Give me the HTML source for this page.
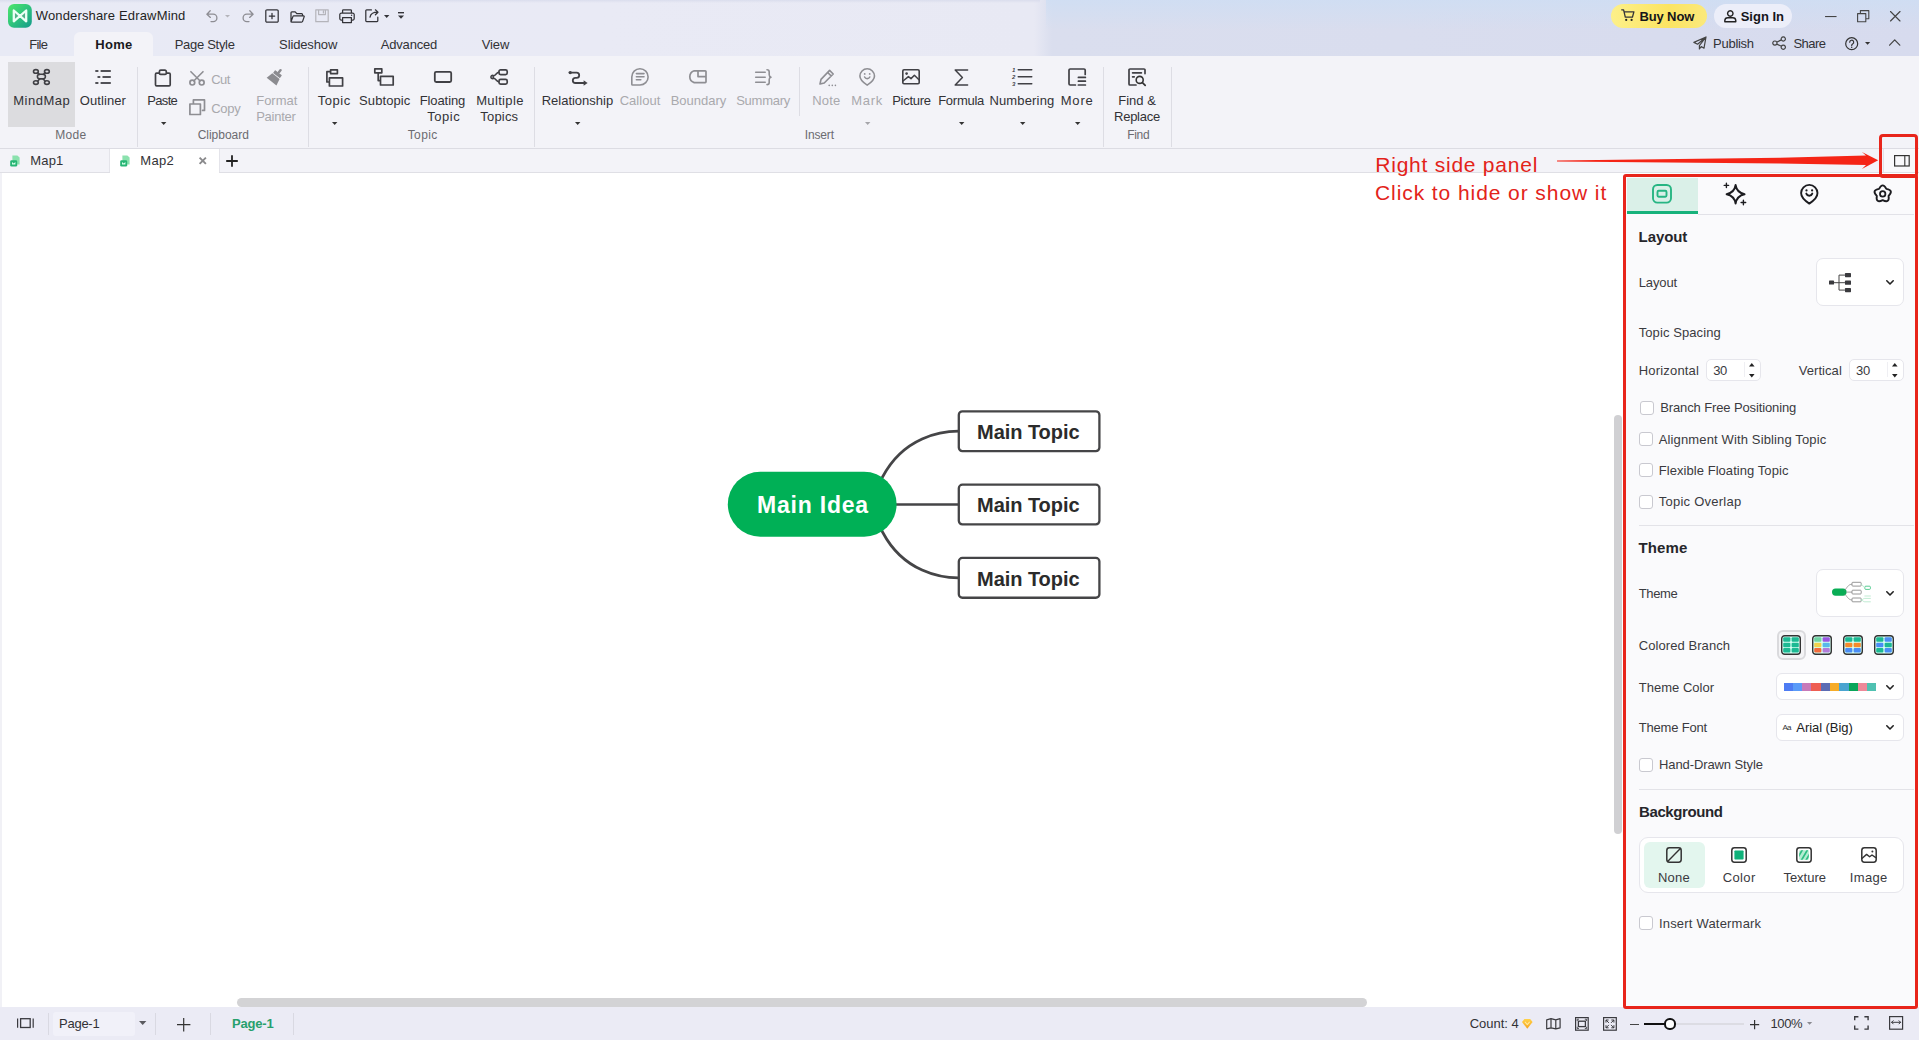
<!DOCTYPE html>
<html lang="en"><head><meta charset="utf-8"><title>Wondershare EdrawMind</title>
<style>
html,body{margin:0;padding:0;}
body{width:1919px;height:1040px;overflow:hidden;position:relative;background:#fff;font-family:"Liberation Sans",sans-serif;}
.a,.t,svg{position:absolute;}
.t{white-space:pre;}
svg{overflow:visible;}
.sep{position:absolute;width:1px;background:#dddde4;}
.cb{position:absolute;width:12px;height:12px;border:1px solid #c9c9d0;border-radius:3px;background:#fff;}
.box{position:absolute;background:#fff;border:1px solid #e6e6ec;box-sizing:border-box;}
</style></head><body>
<div class="a" style="left:0;top:0;width:1919px;height:56px;background:linear-gradient(90deg,#e8eaf5 0px,#e9eaf5 600px,#e8e9f4 1034px,#dadeee 1052px,#d9ddee 1400px,#d7dbee 1919px)"></div>
<div class="a" style="left:1046px;top:0;width:873px;height:30px;background:linear-gradient(180deg,rgba(205,222,244,.75),rgba(205,222,244,0))"></div>
<div class="a" style="left:0;top:0;width:1040px;height:3px;background:linear-gradient(180deg,rgba(215,218,235,.8),rgba(215,218,235,0))"></div>
<div class="a" style="left:74px;top:32px;width:79px;height:24px;background:#f3f3f8;border-radius:6px 6px 0 0"></div>
<div class="a" style="left:0;top:56px;width:1919px;height:92px;background:#f3f3f8"></div>
<div class="a" style="left:0;top:148px;width:1919px;height:1px;background:#dcdce3"></div>
<div class="a" style="left:8px;top:62px;width:67px;height:65px;background:#dcdcdf"></div>
<div class="sep" style="left:137px;top:67px;height:80px"></div>
<div class="sep" style="left:308px;top:67px;height:80px"></div>
<div class="sep" style="left:534px;top:67px;height:80px"></div>
<div class="sep" style="left:1103px;top:67px;height:80px"></div>
<div class="sep" style="left:1171px;top:67px;height:80px"></div>
<div class="sep" style="left:799px;top:67px;height:49px"></div>
<div class="a" style="left:0;top:149px;width:1919px;height:23px;background:#f3f3f8"></div>
<div class="a" style="left:0;top:172px;width:1919px;height:1px;background:#dfdfe5"></div>
<div class="a" style="left:110px;top:149px;width:109px;height:24px;background:#fff"></div>
<div class="sep" style="left:109px;top:149px;height:23px;background:#e4e4ea"></div>
<div class="sep" style="left:219px;top:149px;height:23px;background:#e4e4ea"></div>
<div class="sep" style="left:1883px;top:149px;height:23px;background:#e1e1e8"></div>
<div class="a" style="left:1884px;top:149px;width:35px;height:23px;background:#f8f8fb"></div>
<div class="a" style="left:0;top:173px;width:2px;height:834px;background:#f1f1f6"></div>
<div class="a" style="left:1614px;top:415px;width:8px;height:419px;background:#d0d0d3;border-radius:4px"></div>
<div class="a" style="left:237px;top:998px;width:1130px;height:9px;background:#d3d3d5;border-radius:5px"></div>
<div class="a" style="left:0;top:1007px;width:1919px;height:33px;background:#ebebf5"></div>
<div class="a" style="left:53px;top:1012px;width:82px;height:24px;background:#f1f1f9;border-radius:3px"></div>
<div class="sep" style="left:48px;top:1013px;height:22px;background:#d9d9e2"></div>
<div class="sep" style="left:155px;top:1013px;height:22px;background:#d9d9e2"></div>
<div class="sep" style="left:210px;top:1013px;height:22px;background:#d9d9e2"></div>
<div class="sep" style="left:293px;top:1013px;height:22px;background:#d9d9e2"></div>
<div class="a" style="left:1624px;top:175px;width:293px;height:832px;background:#fafafc"></div>
<svg style="left:0;top:0" width="1919" height="1040" viewBox="0 0 1919 1040" fill="none"><path d="M896 504.5 H958.5" stroke="#454547" stroke-width="2.7" fill="none" stroke-linecap="butt" stroke-linejoin="round"/><path d="M880.4 481 L882.8 476.5 C903.9 436.8 941.2 431.1 958.6 431.1" stroke="#454547" stroke-width="2.7" fill="none" stroke-linecap="butt" stroke-linejoin="round"/><path d="M880.4 528 L882.8 532.5 C903.9 572.2 941.2 577.9 958.6 577.9" stroke="#454547" stroke-width="2.7" fill="none" stroke-linecap="butt" stroke-linejoin="round"/><rect x="958.8" y="411.34999999999997" width="140.6" height="39.8" rx="3.6" fill="#fff" stroke="#454547" stroke-width="2.3"/><rect x="958.8" y="484.65" width="140.6" height="39.8" rx="3.6" fill="#fff" stroke="#454547" stroke-width="2.3"/><rect x="958.8" y="557.9499999999999" width="140.6" height="39.8" rx="3.6" fill="#fff" stroke="#454547" stroke-width="2.3"/><rect x="727.8" y="471.8" width="168.8" height="65" rx="32.5" fill="#00b056"/></svg>
<div class="a" style="left:1627px;top:178px;width:71px;height:33px;background:#daf0e8"></div>
<div class="a" style="left:1627px;top:211px;width:71px;height:3px;background:#17b27b"></div>
<div class="a" style="left:1698px;top:214px;width:216px;height:1px;background:#e2e2e8"></div>
<svg style="left:1652px;top:183.5px" width="20" height="19.5" viewBox="0 0 20 19.5" fill="none" ><rect x="1" y="1" width="18" height="17.6" rx="4.4" stroke="#27b583" stroke-width="1.9"/><rect x="5.5" y="6.7" width="9" height="6" rx="1.2" stroke="#27b583" stroke-width="1.9"/></svg>
<svg style="left:1724px;top:183px" width="22" height="22" viewBox="0 0 22 22" fill="none" ><path d="M11.6 2 C12.4 7.4 14.8 10 20.6 11.2 C14.8 12.4 12.4 15 11.6 20.6 C10.8 15 8.4 12.4 2.6 11.2 C8.4 10 10.8 7.4 11.6 2 Z" stroke="#1c1c20" stroke-width="1.9" fill="none" stroke-linecap="round" stroke-linejoin="round"/><path d="M2.4 .2 V4.6 M.2 2.4 H4.6 M19.4 17.2 V21.8 M17.1 19.5 H21.7" stroke="#1c1c20" stroke-width="1.4" fill="none" stroke-linecap="round" stroke-linejoin="round"/></svg>
<svg style="left:1799.7px;top:184.3px" width="18.6" height="20.6" viewBox="0 0 18.6 20.6" fill="none" ><path d="M9.3 .9 A8.2 8.2 0 0 1 17.5 9.1 C17.5 12.8 14.4 16.4 9.3 19.6 C4.2 16.4 1.1 12.8 1.1 9.1 A8.2 8.2 0 0 1 9.3 .9 Z M6.3 9.6 A3.2 3.2 0 0 0 12.3 9.6" stroke="#1c1c20" stroke-width="1.9" fill="none" stroke-linecap="round" stroke-linejoin="round"/><circle cx="6.5" cy="6.4" r="1.1" fill="#1c1c20"/><circle cx="12.1" cy="6.4" r="1.1" fill="#1c1c20"/></svg>
<svg style="left:1873.3px;top:184.2px" width="19.4" height="19.8" viewBox="0 0 19.4 19.8" fill="none" ><path d="M6.06 4.88 Q9.70 -2.10 13.34 4.88 Q21.11 6.19 15.60 11.82 Q16.75 19.61 9.70 16.10 Q2.65 19.61 3.80 11.82 Q-1.71 6.19 6.06 4.88 Z" stroke="#1c1c20" stroke-width="1.9" fill="none" stroke-linecap="round" stroke-linejoin="round"/><circle cx="9.7" cy="9.9" r="2.7" stroke="#1c1c20" stroke-width="1.8"/></svg>
<div class="box" style="left:1816px;top:258px;width:88px;height:48px;border-radius:7px"></div>
<svg style="left:1829px;top:272.7px" width="22" height="19.4" viewBox="0 0 22 19.4" fill="none" ><rect x="0" y="7.6" width="5" height="4" rx=".6" fill="#3a3a3e"/><rect x="16" y="0" width="6" height="4.2" rx=".6" fill="#3a3a3e"/><rect x="16" y="7.6" width="6" height="4.2" rx=".6" fill="#3a3a3e"/><rect x="16" y="15" width="6" height="4.2" rx=".6" fill="#3a3a3e"/><path d="M5 9.7 H16 M16 2.1 H10 V17.1 H16" stroke="#444" stroke-width="1" fill="none" stroke-linecap="butt" stroke-linejoin="miter"/></svg>
<svg style="left:1886.1px;top:279.9px" width="8" height="5" viewBox="0 0 8 5" fill="none" ><path d="M.8 .8 L4 4 L7.2 .8" stroke="#222" stroke-width="1.6" fill="none" stroke-linecap="round" stroke-linejoin="round"/></svg>
<div class="box" style="left:1705.5px;top:358.6px;width:55px;height:22.6px;border-radius:5px"></div>
<div class="a" style="left:1744.2px;top:362px;width:1px;height:15px;background:#efeff3"></div>
<svg style="left:1749.3px;top:363.4px" width="5.6" height="3.6" viewBox="0 0 5.6 3.6"><path d="M0 3.6H5.6L2.8 0Z" fill="#222"/></svg>
<svg style="left:1749.3px;top:373.7px" width="5.6" height="3.6" viewBox="0 0 5.6 3.6"><path d="M0 0H5.6L2.8 3.6Z" fill="#222"/></svg>
<div class="box" style="left:1848.5px;top:358.6px;width:55px;height:22.6px;border-radius:5px"></div>
<div class="a" style="left:1887.2px;top:362px;width:1px;height:15px;background:#efeff3"></div>
<svg style="left:1892.3px;top:363.4px" width="5.6" height="3.6" viewBox="0 0 5.6 3.6"><path d="M0 3.6H5.6L2.8 0Z" fill="#222"/></svg>
<svg style="left:1892.3px;top:373.7px" width="5.6" height="3.6" viewBox="0 0 5.6 3.6"><path d="M0 0H5.6L2.8 3.6Z" fill="#222"/></svg>
<div class="cb" style="left:1640px;top:400.8px"></div>
<div class="cb" style="left:1639.3px;top:432.3px"></div>
<div class="cb" style="left:1639.3px;top:463.4px"></div>
<div class="cb" style="left:1639.3px;top:494.6px"></div>
<div class="cb" style="left:1639.3px;top:758.2px"></div>
<div class="cb" style="left:1639.3px;top:916.3px"></div>
<div class="a" style="left:1639px;top:525px;width:275px;height:1px;background:#e3e3e8"></div>
<div class="a" style="left:1639px;top:789px;width:275px;height:1px;background:#e3e3e8"></div>
<div class="box" style="left:1816px;top:569.3px;width:88px;height:47.5px;border-radius:7px"></div>
<svg style="left:1831.6px;top:582px" width="40" height="21" viewBox="0 0 40 21" fill="none" ><rect x="0" y="6.5" width="14.6" height="7.2" rx="3.6" fill="#09ad55"/><path d="M13 8 C16 4 17 2.2 20 2.2 M14.6 10.1 H20 M13 12.2 C16 16 17 18 20 18" stroke="#8a8a8a" stroke-width="0.8" fill="none" stroke-linecap="round" stroke-linejoin="round"/><rect x="20" y="0.3" width="9.2" height="3.8" rx=".8" fill="#fff" stroke="#7d7d7d" stroke-width=".8"/><rect x="20" y="8.2" width="9.2" height="3.8" rx=".8" fill="#fff" stroke="#7d7d7d" stroke-width=".8"/><rect x="20" y="16" width="9.2" height="3.8" rx=".8" fill="#fff" stroke="#7d7d7d" stroke-width=".8"/><rect x="32.8" y="4.2" width="5.6" height="3.2" rx="1" fill="#fff" stroke="#2fbf78" stroke-width=".8"/><path d="M29.2 2.2 C31 2.2 31 5.8 32.8 5.8 M29.2 18 C31 18 31 16.4 32.8 16.4 H38.4 M29.2 18 C31 18 31 19.8 32.8 19.8 H38.4 M32.8 14 H38.4" stroke="#a6e3c0" stroke-width="0.7" fill="none" stroke-linecap="round" stroke-linejoin="round"/></svg>
<svg style="left:1886.1px;top:590.9px" width="8" height="5" viewBox="0 0 8 5" fill="none" ><path d="M.8 .8 L4 4 L7.2 .8" stroke="#222" stroke-width="1.6" fill="none" stroke-linecap="round" stroke-linejoin="round"/></svg>
<div class="a" style="left:1776.7px;top:629.6px;width:29.3px;height:30.7px;box-sizing:border-box;border:2px solid #dadadd;border-radius:6px;background:#f4f4f6"></div>
<svg style="left:1781px;top:635px" width="20" height="20" viewBox="0 0 20 20" fill="none" ><rect x=".7" y=".7" width="18.6" height="18.6" rx="3" fill="#d6fff3" stroke="#333" stroke-width="1.4"/><rect x="2.2" y="2.3" width="7.2" height="4.5" rx="1" fill="#1cb993"/><rect x="10.6" y="2.3" width="7.2" height="4.5" rx="1" fill="#1cb993"/><rect x="2.2" y="7.7" width="7.2" height="4.5" rx="1" fill="#1cb993"/><rect x="10.6" y="7.7" width="7.2" height="4.5" rx="1" fill="#1cb993"/><rect x="2.2" y="13.1" width="7.2" height="4.5" rx="1" fill="#1cb993"/><rect x="10.6" y="13.1" width="7.2" height="4.5" rx="1" fill="#1cb993"/></svg>
<svg style="left:1812px;top:635px" width="20" height="20" viewBox="0 0 20 20" fill="none" ><rect x=".7" y=".7" width="18.6" height="18.6" rx="3" fill="#d6fff3" stroke="#333" stroke-width="1.4"/><rect x="2.2" y="2.3" width="7.2" height="4.5" rx="1" fill="#6fd3a2"/><rect x="10.6" y="2.3" width="7.2" height="4.5" rx="1" fill="#9a55e2"/><rect x="2.2" y="7.7" width="7.2" height="4.5" rx="1" fill="#f1d14c"/><rect x="10.6" y="7.7" width="7.2" height="4.5" rx="1" fill="#57b9ea"/><rect x="2.2" y="13.1" width="7.2" height="4.5" rx="1" fill="#f26b3c"/><rect x="10.6" y="13.1" width="7.2" height="4.5" rx="1" fill="#b27cda"/></svg>
<svg style="left:1843px;top:635px" width="20" height="20" viewBox="0 0 20 20" fill="none" ><rect x=".7" y=".7" width="18.6" height="18.6" rx="3" fill="#d6fff3" stroke="#333" stroke-width="1.4"/><rect x="2.2" y="2.3" width="7.2" height="4.5" rx="1" fill="#1cb993"/><rect x="10.6" y="2.3" width="7.2" height="4.5" rx="1" fill="#1cb993"/><rect x="2.2" y="7.7" width="7.2" height="4.5" rx="1" fill="#f58a2c"/><rect x="10.6" y="7.7" width="7.2" height="4.5" rx="1" fill="#f58a2c"/><rect x="2.2" y="13.1" width="7.2" height="4.5" rx="1" fill="#4a8df5"/><rect x="10.6" y="13.1" width="7.2" height="4.5" rx="1" fill="#4a8df5"/></svg>
<svg style="left:1874px;top:635px" width="20" height="20" viewBox="0 0 20 20" fill="none" ><rect x=".7" y=".7" width="18.6" height="18.6" rx="3" fill="#d6fff3" stroke="#333" stroke-width="1.4"/><rect x="2.2" y="2.3" width="7.2" height="4.5" rx="1" fill="#1cb993"/><rect x="10.6" y="2.3" width="7.2" height="4.5" rx="1" fill="#4a8df5"/><rect x="2.2" y="7.7" width="7.2" height="4.5" rx="1" fill="#4a8df5"/><rect x="10.6" y="7.7" width="7.2" height="4.5" rx="1" fill="#1cb993"/><rect x="2.2" y="13.1" width="7.2" height="4.5" rx="1" fill="#1cb993"/><rect x="10.6" y="13.1" width="7.2" height="4.5" rx="1" fill="#4a8df5"/></svg>
<div class="box" style="left:1776.3px;top:673.4px;width:127.4px;height:27px;border-radius:6px"></div>
<div class="a" style="left:1783.70px;top:682.8px;width:9.3px;height:8.5px;background:#4e7cf3"></div><div class="a" style="left:1792.96px;top:682.8px;width:9.3px;height:8.5px;background:#5a9bf8"></div><div class="a" style="left:1802.22px;top:682.8px;width:9.3px;height:8.5px;background:#c77ab9"></div><div class="a" style="left:1811.48px;top:682.8px;width:9.3px;height:8.5px;background:#ee5e53"></div><div class="a" style="left:1820.74px;top:682.8px;width:9.3px;height:8.5px;background:#5c6cb4"></div><div class="a" style="left:1830.00px;top:682.8px;width:9.3px;height:8.5px;background:#f6ac29"></div><div class="a" style="left:1839.26px;top:682.8px;width:9.3px;height:8.5px;background:#4aa4d0"></div><div class="a" style="left:1848.52px;top:682.8px;width:9.3px;height:8.5px;background:#09a65a"></div><div class="a" style="left:1857.78px;top:682.8px;width:9.3px;height:8.5px;background:#ee8999"></div><div class="a" style="left:1867.04px;top:682.8px;width:9.3px;height:8.5px;background:#4fc1b1"></div>
<svg style="left:1886.1px;top:684.7px" width="8" height="5" viewBox="0 0 8 5" fill="none" ><path d="M.8 .8 L4 4 L7.2 .8" stroke="#222" stroke-width="1.6" fill="none" stroke-linecap="round" stroke-linejoin="round"/></svg>
<div class="box" style="left:1776.3px;top:713.6px;width:127.4px;height:27px;border-radius:6px"></div>
<svg style="left:1886.1px;top:724.9px" width="8" height="5" viewBox="0 0 8 5" fill="none" ><path d="M.8 .8 L4 4 L7.2 .8" stroke="#222" stroke-width="1.6" fill="none" stroke-linecap="round" stroke-linejoin="round"/></svg>
<div class="box" style="left:1639px;top:837px;width:264.6px;height:55.6px;border-radius:9px"></div>
<div class="a" style="left:1644.3px;top:842px;width:60.6px;height:46px;border-radius:6px;background:#e3f6ee"></div>
<svg style="left:1666px;top:847px" width="16" height="16" viewBox="0 0 16 16" fill="none" ><rect x=".8" y=".8" width="14.4" height="14.4" rx="2.6" stroke="#333" stroke-width="1.5"/><path d="M1.6 14.4 L14.4 1.6" stroke="#333" stroke-width="1.4" fill="none" stroke-linecap="round" stroke-linejoin="round"/></svg>
<svg style="left:1731px;top:847px" width="16" height="16" viewBox="0 0 16 16" fill="none" ><rect x=".8" y=".8" width="14.4" height="14.4" rx="2.6" stroke="#333" stroke-width="1.5"/><rect x="3.4" y="3.4" width="9.2" height="9.2" rx=".8" fill="#0fb27a"/></svg>
<svg style="left:1796px;top:847px" width="16" height="16" viewBox="0 0 16 16" fill="none" ><rect x=".8" y=".8" width="14.4" height="14.4" rx="2.6" stroke="#333" stroke-width="1.5"/><rect x="3.2" y="3.2" width="9.6" height="9.6" rx=".8" fill="#b4ecd2"/><clipPath id="tc"><rect x="3.2" y="3.2" width="9.6" height="9.6" rx=".8"/></clipPath><g clip-path="url(#tc)" stroke="#2dbd82" stroke-width="1.7"><path d="M1.5 11 L7.5 1 M5 14 L12 2 M9 15 L15.5 4 M13 15 L17 8"/></g></svg>
<svg style="left:1861px;top:847px" width="16" height="16" viewBox="0 0 16 16" fill="none" ><rect x=".8" y=".8" width="14.4" height="14.4" rx="2.6" stroke="#333" stroke-width="1.5"/><path d="M1.2 11.2 L5.6 7.4 L8.6 9.8 L11 8 L14.8 10.6" stroke="#333" stroke-width="1.4" fill="none" stroke-linecap="round" stroke-linejoin="round"/><circle cx="11.4" cy="4.6" r="1" fill="#333"/></svg>
<svg style="left:8px;top:4px" width="24" height="24" viewBox="0 0 24 24" fill="none" ><defs><linearGradient id="lg" x1="0" y1="0" x2="1" y2="1"><stop offset="0" stop-color="#50e76c"/><stop offset=".5" stop-color="#2fc47c"/><stop offset="1" stop-color="#149a8c"/></linearGradient></defs>
<rect width="23.8" height="23.8" rx="6" fill="url(#lg)"/>
<path d="M5.8 6.4 L11.9 11.9 L5.8 17.4 Z M18.2 6.4 L11.9 11.9 L18.2 17.4 Z" fill="#5aae8c" fill-opacity=".85"/>
<path d="M5.8 17.3 V6.5 L18.2 17.3 V6.5 L5.8 17.3" stroke="#ecfff6" stroke-width="2.3" stroke-linejoin="round" stroke-linecap="round" fill="none"/></svg>
<svg style="left:206px;top:10px" width="12" height="12" viewBox="0 0 12 12" fill="none" ><path d="M4.2 0.8 L0.9 4.2 L4.4 7.4 M1.2 4.2 H7.2 A3.7 3.7 0 0 1 7.2 11.6 H5" stroke="#8d8d93" stroke-width="1.3" fill="none" stroke-linecap="round" stroke-linejoin="round"/></svg>
<svg style="left:225.3px;top:15.0px" width="5" height="2.6" viewBox="0 0 5 2.6"><path d="M0 0H5L2.5 2.6Z" fill="#b4b4ba"/></svg>
<svg style="left:242px;top:10px" width="12" height="12" viewBox="0 0 12 12" fill="none" ><path d="M7.8 0.8 L11.1 4.2 L7.6 7.4 M10.8 4.2 H4.8 A3.7 3.7 0 0 0 4.8 11.6 H7" stroke="#8d8d93" stroke-width="1.3" fill="none" stroke-linecap="round" stroke-linejoin="round"/></svg>
<svg style="left:265px;top:9px" width="14" height="14" viewBox="0 0 14 14" fill="none" ><path d="M2 .8 H12 A1.2 1.2 0 0 1 13.2 2 V12 A1.2 1.2 0 0 1 12 13.2 H2 A1.2 1.2 0 0 1 .8 12 V2 A1.2 1.2 0 0 1 2 .8 Z M7 4.3 V9.7 M4.3 7 H9.7" stroke="#333338" stroke-width="1.25" fill="none" stroke-linecap="round" stroke-linejoin="round"/></svg>
<svg style="left:290px;top:10.5px" width="15" height="12" viewBox="0 0 15 12" fill="none" ><path d="M1 10.5 V1.8 A.9 .9 0 0 1 1.9 .9 H5.2 L6.8 2.6 H11.6 A.9 .9 0 0 1 12.5 3.5 V4.8 M1 10.8 L3 5.4 A.9 .9 0 0 1 3.8 4.8 H13.6 A.6 .6 0 0 1 14.2 5.6 L12.6 10.4 A.9 .9 0 0 1 11.8 11 H1.6" stroke="#333338" stroke-width="1.25" fill="none" stroke-linecap="round" stroke-linejoin="round"/></svg>
<svg style="left:315px;top:9px" width="14" height="13.5" viewBox="0 0 14 13.5" fill="none" ><path d="M.8 .8 H13.2 V12.7 H.8 Z M3.6 .8 V5.6 H10.4 V.8 M8.4 2.2 V4" stroke="#b4b4ba" stroke-width="1.2" fill="none" stroke-linecap="round" stroke-linejoin="round"/></svg>
<svg style="left:339px;top:9px" width="16" height="14.5" viewBox="0 0 16 14.5" fill="none" ><path d="M3.6 4.2 V1.6 A.8 .8 0 0 1 4.4 .8 H11.6 A.8 .8 0 0 1 12.4 1.6 V4.2 M3.6 11 H2.2 A1.4 1.4 0 0 1 .8 9.6 V5.6 A1.4 1.4 0 0 1 2.2 4.2 H13.8 A1.4 1.4 0 0 1 15.2 5.6 V9.6 A1.4 1.4 0 0 1 13.8 11 H12.4 M3.6 8.6 H12.4 V13.6 H3.6 Z" stroke="#333338" stroke-width="1.25" fill="none" stroke-linecap="round" stroke-linejoin="round"/><circle cx="12.6" cy="6.3" r=".7" fill="#333338"/></svg>
<svg style="left:365px;top:9px" width="14.5" height="13.5" viewBox="0 0 14.5 13.5" fill="none" ><path d="M6.4 .9 H1.6 A.8 .8 0 0 0 .8 1.7 V11.8 A.8 .8 0 0 0 1.6 12.6 H12 A.8 .8 0 0 0 12.8 11.8 V8.2 M5 8.2 C5.6 5 8 3.2 12.6 3.2 M10.4 .8 L13 3.2 L10.4 5.8" stroke="#333338" stroke-width="1.25" fill="none" stroke-linecap="round" stroke-linejoin="round"/></svg>
<svg style="left:383.90000000000003px;top:15.0px" width="5.4" height="3" viewBox="0 0 5.4 3"><path d="M0 0H5.4L2.7 3Z" fill="#333338"/></svg>
<svg style="left:397.5px;top:12px" width="6" height="8" viewBox="0 0 6 8" fill="none" ><rect x="0" y="0" width="6" height="1.4" fill="#333338"/><path d="M0 3.4H6L3 6.8Z" fill="#333338"/></svg>
<div class="a" style="left:1610.5px;top:4px;width:96px;height:23.5px;border-radius:12px;background:linear-gradient(90deg,#fdf08a,#fbe462 60%,#fbe97c)"></div>
<svg style="left:1620.5px;top:9px" width="14" height="12.5" viewBox="0 0 14 12.5" fill="none" ><path d="M.7 .8 H2.6 L4.3 8.2 H11.4 L12.9 2.9 H3.1" stroke="#333338" stroke-width="1.3" fill="none" stroke-linecap="round" stroke-linejoin="round"/><circle cx="5.2" cy="10.9" r="1.1" fill="#222"/><circle cx="10.6" cy="10.9" r="1.1" fill="#222"/></svg>
<div class="a" style="left:1714px;top:4px;width:78px;height:23.5px;border-radius:12px;background:#eceef9"></div>
<svg style="left:1723.7px;top:10px" width="12.6" height="12.6" viewBox="0 0 12.6 12.6" fill="none" ><path d="M6.3 .8 A2.7 2.7 0 1 1 6.29 .8 Z M.8 11.8 V10.6 A3 3 0 0 1 3.8 7.8 H8.8 A3 3 0 0 1 11.8 10.6 V11.8 Z" stroke="#222" stroke-width="1.4" fill="none" stroke-linecap="round" stroke-linejoin="round"/></svg>
<svg style="left:1825px;top:16px" width="12" height="1.2" viewBox="0 0 12 1.2" fill="none" ><rect width="11.6" height="1.1" fill="#444"/></svg>
<svg style="left:1856.5px;top:9.5px" width="12.5" height="12.5" viewBox="0 0 12.5 12.5" fill="none" ><path d="M.6 3.6 H8.8 V11.8 H.6 Z M3.4 3.4 V.6 H11.8 V8.8 H9" stroke="#444" stroke-width="1.1" fill="none" stroke-linecap="round" stroke-linejoin="round"/></svg>
<svg style="left:1889.5px;top:11px" width="10.5" height="10.5" viewBox="0 0 10.5 10.5" fill="none" ><path d="M.5 .5 L10 10 M10 .5 L.5 10" stroke="#444" stroke-width="1.15" fill="none" stroke-linecap="round" stroke-linejoin="round"/></svg>
<svg style="left:1692.5px;top:36px" width="14" height="14" viewBox="0 0 14 14" fill="none" ><path d="M13 1 L.9 6.4 L4.6 8.2 L13 1 L6.4 9.6 V13 L8.2 10.6 L11 12.2 Z" stroke="#444" stroke-width="1.2" fill="none" stroke-linecap="round" stroke-linejoin="round"/></svg>
<svg style="left:1771.7px;top:36px" width="14.2" height="14.2" viewBox="0 0 14.2 14.2" fill="none" ><path d="M11.3 .9 A2.1 2.1 0 1 1 11.29 .9 Z M2.9 5 A2.1 2.1 0 1 1 2.89 5 Z M11.3 9.1 A2.1 2.1 0 1 1 11.29 9.1 Z M4.8 6.1 L9.4 3.9 M4.8 8.1 L9.4 10.3" stroke="#444" stroke-width="1.2" fill="none" stroke-linecap="round" stroke-linejoin="round"/></svg>
<svg style="left:1845px;top:36.5px" width="13.4" height="13.4" viewBox="0 0 13.4 13.4" fill="none" ><circle cx="6.7" cy="6.7" r="6" stroke="#333" stroke-width="1.2"/><path d="M4.7 5.2 A2 2 0 1 1 7.6 7 C6.9 7.4 6.7 7.8 6.7 8.4" stroke="#333" stroke-width="1.2" fill="none" stroke-linecap="round" stroke-linejoin="round"/><circle cx="6.7" cy="10.2" r=".75" fill="#333"/></svg>
<svg style="left:1864.8000000000002px;top:42.2px" width="5.2" height="2.8" viewBox="0 0 5.2 2.8"><path d="M0 0H5.2L2.6 2.8Z" fill="#333"/></svg>
<svg style="left:1888.6px;top:39px" width="11.4" height="7" viewBox="0 0 11.4 7" fill="none" ><path d="M.6 6.2 L5.7 .8 L10.8 6.2" stroke="#444" stroke-width="1.2" fill="none" stroke-linecap="round" stroke-linejoin="round"/></svg>
<svg style="left:32px;top:68px" width="19" height="18" viewBox="0 0 19 18" fill="none" ><ellipse cx="3.8999999999999986" cy="3.4000000000000057" rx="2.4" ry="1.8" stroke="#404045" stroke-width="1.6"/><ellipse cx="14.899999999999999" cy="3.4000000000000057" rx="2.4" ry="1.8" stroke="#404045" stroke-width="1.6"/><ellipse cx="3.8999999999999986" cy="14.599999999999994" rx="2.4" ry="1.8" stroke="#404045" stroke-width="1.6"/><ellipse cx="14.899999999999999" cy="14.599999999999994" rx="2.4" ry="1.8" stroke="#404045" stroke-width="1.6"/><rect x="5.399999999999999" y="6.299999999999997" width="8" height="4.6" rx="2.3" stroke="#404045" stroke-width="1.6"/><path d="M5.600000000000001 4.700000000000003 L7.600000000000001 6.5 M13.200000000000003 4.700000000000003 L11.200000000000003 6.5 M5.600000000000001 13.299999999999997 L7.600000000000001 11 M13.200000000000003 13.299999999999997 L11.200000000000003 11" stroke="#404045" stroke-width="1.6" fill="none" stroke-linecap="round" stroke-linejoin="round"/></svg>
<svg style="left:95px;top:70px" width="16" height="14" viewBox="0 0 16 14" fill="none" ><rect x="0.29999999999999716" y="0.09999999999999998" width="3.1000000000000085" height="1.8" fill="#404045"/><rect x="5.599999999999994" y="0.09999999999999998" width="10.200000000000003" height="1.8" fill="#404045"/><rect x="2.5" y="6.1" width="2.799999999999997" height="1.8" fill="#404045"/><rect x="7.5" y="6.1" width="8.299999999999997" height="1.8" fill="#404045"/><rect x="0.29999999999999716" y="12.1" width="3.1000000000000085" height="1.8" fill="#404045"/><rect x="5.599999999999994" y="12.1" width="10.200000000000003" height="1.8" fill="#404045"/></svg>
<svg style="left:154px;top:68.5px" width="18" height="18" viewBox="0 0 18 18" fill="none" ><path d="M5 4.2 H2.6 A1.1 1.1 0 0 0 1.5 5.3 V15.7 A1.1 1.1 0 0 0 2.6 16.8 H15.1 A1.1 1.1 0 0 0 16.2 15.7 V5.3 A1.1 1.1 0 0 0 15.1 4.2 H12.6 M6.8 1.2 H10.9 A1.4 1.4 0 0 1 12.3 2.6 V4.2 A1.2 1.2 0 0 1 11.1 5.4 H6.6 A1.2 1.2 0 0 1 5.4 4.2 V2.6 A1.4 1.4 0 0 1 6.8 1.2 Z" stroke="#404045" stroke-width="1.7" fill="none" stroke-linecap="round" stroke-linejoin="round"/></svg>
<svg style="left:160.9px;top:122.1px" width="5.4" height="3" viewBox="0 0 5.4 3"><path d="M0 0H5.4L2.7 3Z" fill="#333"/></svg>
<svg style="left:189px;top:70.5px" width="16" height="15" viewBox="0 0 16 15" fill="none" ><path d="M1.9 .7 L10.9 9.8 M14 .7 L5 9.8" stroke="#8e8e93" stroke-width="1.6" fill="none" stroke-linecap="round" stroke-linejoin="round"/><circle cx="3.3" cy="11.6" r="2.4" stroke="#8e8e93" stroke-width="1.7"/><circle cx="12.7" cy="11.6" r="2.4" stroke="#8e8e93" stroke-width="1.7"/></svg>
<svg style="left:189px;top:99px" width="16.5" height="16.5" viewBox="0 0 16.5 16.5" fill="none" ><path d="M.9 5 H11.4 V15.5 H.9 Z M4.4 4.6 V.9 H15.5 V11.4 H13.6" stroke="#8e8e93" stroke-width="1.7" fill="none" stroke-linecap="round" stroke-linejoin="round"/></svg>
<svg style="left:267px;top:68.5px" width="17" height="16" viewBox="0 0 17 16" fill="none" ><g transform="translate(8.4 7.8) rotate(38)" fill="#8b8b90"><rect x="-1.2" y="-9.6" width="2.4" height="5" rx="1.1"/><rect x="-4.3" y="-5.2" width="8.6" height="3.6" rx=".6"/><path d="M-4.6 -.9 H4.6 L6.2 6.2 H-6.2 Z"/></g></svg>
<svg style="left:326px;top:69px" width="17.5" height="18" viewBox="0 0 17.5 18" fill="none" ><path d="M4.6 .8 H11.4 V4.6 H4.6 Z M3.4 8.9 H16.6 V17 H3.4 Z M4.4 2.7 H.9 V13 H3.2" stroke="#404045" stroke-width="1.7" fill="none" stroke-linecap="round" stroke-linejoin="round"/></svg>
<svg style="left:331.8px;top:122.1px" width="5.4" height="3" viewBox="0 0 5.4 3"><path d="M0 0H5.4L2.7 3Z" fill="#333"/></svg>
<svg style="left:374px;top:68px" width="20" height="18" viewBox="0 0 20 18" fill="none" ><path d="M.8 .8 H7.8 V4.8 H.8 Z M6.5 8.4 H19.2 V17 H6.5 Z M4.2 5 V12.6 H6.3" stroke="#404045" stroke-width="1.7" fill="none" stroke-linecap="round" stroke-linejoin="round"/></svg>
<svg style="left:434px;top:71.3px" width="18" height="11.8" viewBox="0 0 18 11.8" fill="none" ><rect x=".8" y=".8" width="16.4" height="10.2" rx="1.4" stroke="#404045" stroke-width="1.8"/></svg>
<svg style="left:490px;top:69px" width="18" height="16" viewBox="0 0 18 16" fill="none" ><rect x="9" y=".8" width="8.2" height="4.9" rx="1.6" stroke="#404045" stroke-width="1.7"/><rect x="9" y="10.3" width="8.2" height="4.9" rx="1.6" stroke="#404045" stroke-width="1.7"/><path d="M3.2 6.4 A1.7 1.7 0 1 0 3.2 9.6 Z M3.4 7 C6 6.6 6.4 3.4 8.8 3.3 M3.4 9 C6 9.4 6.4 12.6 8.8 12.7" stroke="#404045" stroke-width="1.6" fill="none" stroke-linecap="round" stroke-linejoin="round"/></svg>
<svg style="left:567.5px;top:69.5px" width="20" height="16" viewBox="0 0 20 16" fill="none" ><circle cx="2.2" cy="2.6" r="1.7" fill="#404045"/><path d="M2.2 2.6 H8.6 A2.6 2.6 0 0 1 8.6 7.8 H7.4 A2.6 2.6 0 0 0 7.4 13 H16" stroke="#404045" stroke-width="1.8" fill="none" stroke-linecap="round" stroke-linejoin="round"/><path d="M15.6 10.2 L19.6 13 L15.6 15.8 Z" fill="#404045"/></svg>
<svg style="left:574.8px;top:122.1px" width="5.4" height="3" viewBox="0 0 5.4 3"><path d="M0 0H5.4L2.7 3Z" fill="#333"/></svg>
<svg style="left:631px;top:68px" width="18" height="18" viewBox="0 0 18 18" fill="none" ><path d="M9 .8 A8.1 8.1 0 0 1 9 17 H1.6 A.8 .8 0 0 1 .8 16.2 V9 A8.1 8.1 0 0 1 9 .8 Z M5.4 5.6 H13 M5.4 8.7 H13 M5.4 11.8 H9.8" stroke="#8e8e93" stroke-width="1.6" fill="none" stroke-linecap="round" stroke-linejoin="round"/></svg>
<svg style="left:689px;top:70px" width="18" height="13.5" viewBox="0 0 18 13.5" fill="none" ><path d="M5.2 .8 H16.2 A.8 .8 0 0 1 17 1.6 V11.8 A.8 .8 0 0 1 16.2 12.6 H5.2 C2.4 11.6 .8 9.4 .8 6.7 C.8 4 2.4 1.8 5.2 .8 Z M9 .9 V6.6 H16.8" stroke="#8e8e93" stroke-width="1.7" fill="none" stroke-linecap="round" stroke-linejoin="round"/></svg>
<svg style="left:754.5px;top:68.5px" width="17" height="17" viewBox="0 0 17 17" fill="none" ><path d="M.7 3.2 H10.2 M.7 8.2 H10.2 M.7 13.2 H10.2 M12 .8 C13.8 .8 14.2 1.6 14.2 3 V5.8 C14.2 7.2 14.8 8 16 8.2 C14.8 8.4 14.2 9.2 14.2 10.6 V13.4 C14.2 14.8 13.8 15.6 12 15.6" stroke="#8e8e93" stroke-width="1.6" fill="none" stroke-linecap="round" stroke-linejoin="round"/></svg>
<svg style="left:818.5px;top:68.5px" width="18" height="18" viewBox="0 0 18 18" fill="none" ><path d="M10.6 1.4 L14.2 5 L5.2 14 L1 15 L2 10.4 Z M8.6 3.4 L12.2 7" stroke="#8e8e93" stroke-width="1.6" fill="none" stroke-linecap="round" stroke-linejoin="round"/><circle cx="10.2" cy="16.4" r=".8" fill="#8e8e93"/><circle cx="13.3" cy="16.4" r=".8" fill="#8e8e93"/><circle cx="16.4" cy="16.4" r=".8" fill="#8e8e93"/></svg>
<svg style="left:859px;top:68px" width="16.4" height="18" viewBox="0 0 16.4 18" fill="none" ><path d="M8.2 .8 A7.3 7.3 0 0 1 15.5 8.1 C15.5 11.4 12.6 14.4 8.2 17.2 C3.8 14.4 .9 11.4 .9 8.1 A7.3 7.3 0 0 1 8.2 .8 Z M5.6 9 A2.9 2.9 0 0 0 10.8 9" stroke="#8e8e93" stroke-width="1.6" fill="none" stroke-linecap="round" stroke-linejoin="round"/><circle cx="5.7" cy="5.9" r=".9" fill="#8e8e93"/><circle cx="10.7" cy="5.9" r=".9" fill="#8e8e93"/></svg>
<svg style="left:864.6999999999999px;top:122.1px" width="5.4" height="3" viewBox="0 0 5.4 3"><path d="M0 0H5.4L2.7 3Z" fill="#a5a5aa"/></svg>
<svg style="left:902px;top:69px" width="18" height="15.6" viewBox="0 0 18 15.6" fill="none" ><rect x=".8" y=".8" width="16.4" height="14" rx="1.2" stroke="#404045" stroke-width="1.6"/><circle cx="4.6" cy="4.6" r="1.3" fill="#404045"/><path d="M1 12 L6.4 7.6 L9 9.6 L12.4 6.2 L17 10.8" stroke="#404045" stroke-width="1.5" fill="none" stroke-linecap="round" stroke-linejoin="round"/></svg>
<svg style="left:954px;top:68.5px" width="14.5" height="17" viewBox="0 0 14.5 17" fill="none" ><path d="M13.6 .9 H1.2 L8.4 8.5 L1.2 16 H13.6" stroke="#404045" stroke-width="1.5" fill="none" stroke-linecap="round" stroke-linejoin="round"/></svg>
<svg style="left:958.9px;top:122.1px" width="5.4" height="3" viewBox="0 0 5.4 3"><path d="M0 0H5.4L2.7 3Z" fill="#333"/></svg>
<svg style="left:1012px;top:68px" width="20" height="18" viewBox="0 0 20 18" fill="none" ><path d="M6.2 1.7 H19.8 M6.2 8.8 H19.8 M6.2 15.8 H19.8" stroke="#404045" stroke-width="1.4" fill="none" stroke-linecap="round" stroke-linejoin="round"/><text x="0" y="3.9" font-family="Liberation Sans,sans-serif" font-size="6" font-weight="700" font-style="italic" fill="#404045">1</text><text x="0" y="11" font-family="Liberation Sans,sans-serif" font-size="6" font-weight="700" font-style="italic" fill="#404045">2</text><text x="0" y="18" font-family="Liberation Sans,sans-serif" font-size="6" font-weight="700" font-style="italic" fill="#404045">3</text></svg>
<svg style="left:1019.6999999999999px;top:122.1px" width="5.4" height="3" viewBox="0 0 5.4 3"><path d="M0 0H5.4L2.7 3Z" fill="#333"/></svg>
<svg style="left:1068px;top:68px" width="18" height="18" viewBox="0 0 18 18" fill="none" ><path d="M17.2 6.4 V2.2 A1.2 1.2 0 0 0 16 1 H2.2 A1.2 1.2 0 0 0 1 2.2 V15.8 A1.2 1.2 0 0 0 2.2 17 H7.4 M10.4 9.4 H17.4 M10.4 13.2 H17.4 M10.4 17 H17.4" stroke="#404045" stroke-width="1.7" fill="none" stroke-linecap="round" stroke-linejoin="round"/></svg>
<svg style="left:1074.7px;top:122.1px" width="5.4" height="3" viewBox="0 0 5.4 3"><path d="M0 0H5.4L2.7 3Z" fill="#333"/></svg>
<svg style="left:1128px;top:68px" width="18" height="18" viewBox="0 0 18 18" fill="none" ><path d="M17 5.6 V2 A1 1 0 0 0 16 1 H2 A1 1 0 0 0 1 2 V16 A1 1 0 0 0 2 17 H8 M4.6 4.8 H13.4 M4.6 8.8 H6.2" stroke="#404045" stroke-width="1.7" fill="none" stroke-linecap="round" stroke-linejoin="round"/><circle cx="11.7" cy="11.9" r="3.5" stroke="#333" stroke-width="1.6"/><path d="M14.4 14.6 L17.2 17.4" stroke="#333" stroke-width="1.7" fill="none" stroke-linecap="round" stroke-linejoin="round"/></svg>
<svg style="left:10px;top:155px" width="10" height="12" viewBox="0 0 10 12" fill="none" ><path d="M2.4 .4 H7.4 L9.6 2.6 V9.6 H2.4 Z" fill="#8be2ae"/><rect x=".2" y="5.2" width="7" height="6.4" rx="1.3" fill="#25b574"/><path d="M2 7 V9.6 H5.4 V7 L3.7 8.6 Z" fill="#d9ffea"/></svg>
<svg style="left:119.6px;top:155px" width="10" height="12" viewBox="0 0 10 12" fill="none" ><path d="M2.4 .4 H7.4 L9.6 2.6 V9.6 H2.4 Z" fill="#8be2ae"/><rect x=".2" y="5.2" width="7" height="6.4" rx="1.3" fill="#25b574"/><path d="M2 7 V9.6 H5.4 V7 L3.7 8.6 Z" fill="#d9ffea"/></svg>
<svg style="left:199px;top:157px" width="7.5" height="7.5" viewBox="0 0 7.5 7.5" fill="none" ><path d="M.6 .6 L6.9 6.9 M6.9 .6 L.6 6.9" stroke="#8a8a8c" stroke-width="1.9" fill="none" stroke-linecap="butt" stroke-linejoin="round"/></svg>
<svg style="left:226px;top:155px" width="12" height="12" viewBox="0 0 12 12" fill="none" ><path d="M6 .2 V11.8 M.2 6 H11.8" stroke="#222" stroke-width="1.8" fill="none" stroke-linecap="butt" stroke-linejoin="round"/></svg>
<svg style="left:16.7px;top:1018.3px" width="16.8" height="10.2" viewBox="0 0 16.8 10.2" fill="none" ><path d="M.6 .4 V9.8 M16.2 .4 V9.8" stroke="#3a3a3f" stroke-width="1.2" fill="none" stroke-linecap="butt" stroke-linejoin="round"/><rect x="3.6" y=".7" width="9.6" height="8.8" stroke="#3a3a3f" stroke-width="1.3"/></svg>
<svg style="left:139.3px;top:1021.0px" width="7.4" height="4" viewBox="0 0 7.4 4"><path d="M0 0H7.4L3.7 4Z" fill="#5a5a5f"/></svg>
<svg style="left:176.7px;top:1017.7px" width="13.4" height="13.4" viewBox="0 0 13.4 13.4" fill="none" ><path d="M6.7 0 V13.4 M0 6.7 H13.4" stroke="#333" stroke-width="1.2" fill="none" stroke-linecap="butt" stroke-linejoin="round"/></svg>
<svg style="left:1522.2px;top:1018.5px" width="10.6" height="10" viewBox="0 0 10.6 10" fill="none" ><defs><linearGradient id="dg" x1="0" y1="0" x2="0" y2="1"><stop offset="0" stop-color="#ffd24a"/><stop offset="1" stop-color="#f7a41d"/></linearGradient></defs><path d="M2.4 0 H8.2 L10.6 3 L5.3 9.8 L0 3 Z" fill="url(#dg)"/><path d="M3.2 3.2 L5.3 5.6 L7.4 3.2" stroke="#ffe9a0" stroke-width="1.1" fill="none" stroke-linecap="round" stroke-linejoin="round"/></svg>
<svg style="left:1546px;top:1018px" width="14.8" height="11.6" viewBox="0 0 14.8 11.6" fill="none" ><path d="M.7 1.8 L5 .7 L9.8 1.8 L14.1 .7 V9.8 L9.8 10.9 L5 9.8 L.7 10.9 Z M5 .7 V9.8 M9.8 1.8 V10.9" stroke="#3a3a3f" stroke-width="1.2" fill="none" stroke-linecap="round" stroke-linejoin="round"/></svg>
<svg style="left:1575px;top:1017px" width="13.8" height="13.8" viewBox="0 0 13.8 13.8" fill="none" ><rect x=".6" y=".6" width="12.6" height="12.6" stroke="#3a3a3f" stroke-width="1.2"/><rect x="3.4" y="4.2" width="7" height="5.4" stroke="#3a3a3f" stroke-width="1.3"/><path d="M2.2 3.6 V2.2 H3.6 M10.2 2.2 H11.6 V3.6 M11.6 10.2 V11.6 H10.2 M3.6 11.6 H2.2 V10.2" stroke="#3a3a3f" stroke-width="0.9" fill="none" stroke-linecap="round" stroke-linejoin="round"/></svg>
<svg style="left:1603px;top:1017px" width="13.9" height="13.8" viewBox="0 0 13.9 13.8" fill="none" ><rect x=".6" y=".6" width="12.7" height="12.6" stroke="#3a3a3f" stroke-width="1.2"/><path d="M3 5.2 V3 H5.2 M3.2 3.2 L5.6 5.6 M8.7 3 H10.9 V5.2 M10.7 3.2 L8.3 5.6 M10.9 8.6 V10.8 H8.7 M10.7 10.6 L8.3 8.2 M5.2 10.8 H3 V8.6 M3.2 10.6 L5.6 8.2" stroke="#3a3a3f" stroke-width="1" fill="none" stroke-linecap="round" stroke-linejoin="round"/></svg>
<div class="a" style="left:1630px;top:1024px;width:9px;height:1px;background:#444"></div>
<div class="a" style="left:1675px;top:1023.2px;width:69px;height:1.5px;background:#dcdce3"></div>
<div class="a" style="left:1643.8px;top:1022.8px;width:22px;height:2.4px;background:#111"></div>
<div class="a" style="left:1664.4px;top:1018.4px;width:7.2px;height:7.2px;border:2px solid #111;border-radius:50%;background:#fff"></div>
<svg style="left:1750px;top:1019.7px" width="9.2" height="9.2" viewBox="0 0 9.2 9.2" fill="none" ><path d="M4.6 0 V9.2 M0 4.6 H9.2" stroke="#333" stroke-width="1.2" fill="none" stroke-linecap="butt" stroke-linejoin="round"/></svg>
<svg style="left:1807.0px;top:1022.0px" width="5.2" height="2.8" viewBox="0 0 5.2 2.8"><path d="M0 0H5.2L2.6 2.8Z" fill="#8a8a90"/></svg>
<svg style="left:1853.7px;top:1016px" width="14.8" height="13.8" viewBox="0 0 14.8 13.8" fill="none" ><path d="M.7 4.2 V.7 H4.4 M10.4 .7 H14.1 V4.2 M14.1 9.6 V13.1 H10.4 M4.4 13.1 H.7 V9.6" stroke="#3a3a3f" stroke-width="1.4" fill="none" stroke-linecap="butt" stroke-linejoin="miter"/></svg>
<svg style="left:1889px;top:1016px" width="14.2" height="13.8" viewBox="0 0 14.2 13.8" fill="none" ><rect x=".6" y=".6" width="13" height="12.6" stroke="#3a3a3f" stroke-width="1.2"/><path d="M2.6 6.3 H11.6 M4.2 4.7 L2.6 6.3 L4.2 7.9 M10 4.7 L11.6 6.3 L10 7.9" stroke="#3a3a3f" stroke-width="1" fill="none" stroke-linecap="round" stroke-linejoin="round"/></svg>
<div class="a" style="left:1623px;top:174px;width:295px;height:835px;box-sizing:border-box;border:3px solid #e8251b;border-radius:3px"></div>
<div class="a" style="left:1879px;top:134px;width:39px;height:43.5px;box-sizing:border-box;border:3px solid #e8251b;border-radius:4px"></div>
<svg style="left:1894px;top:155px" width="16" height="11.6" viewBox="0 0 16 11.6" fill="none" ><rect x=".6" y=".6" width="14.6" height="10.4" stroke="#333" stroke-width="1.2"/><path d="M10.8 .6 V11" stroke="#333" stroke-width="1.1"/></svg>
<svg style="left:0;top:0" width="1919" height="1040" viewBox="0 0 1919 1040"><path d="M1557 160.4 L1780 157.8 L1866 155.6 L1861.9 152 L1878.2 160.3 L1861.9 169 L1866 165 L1780 163.4 L1557 161.6 Z" fill="#f52416"/></svg>
<span class="t" style="left:35.7px;top:6.5px;font-size:13px;line-height:18px;color:#1f1f24;font-weight:400;letter-spacing:0.16px">Wondershare EdrawMind</span>
<span class="t" style="left:29.2px;top:35.5px;font-size:13px;line-height:18px;color:#323236;font-weight:400;letter-spacing:-0.70px">File</span>
<span class="t" style="left:95.3px;top:35.5px;font-size:13px;line-height:18px;color:#1a1a1e;font-weight:700;letter-spacing:0.31px">Home</span>
<span class="t" style="left:174.7px;top:35.5px;font-size:13px;line-height:18px;color:#323236;font-weight:400;letter-spacing:-0.29px">Page Style</span>
<span class="t" style="left:279.1px;top:35.5px;font-size:13px;line-height:18px;color:#323236;font-weight:400;letter-spacing:-0.13px">Slideshow</span>
<span class="t" style="left:380.7px;top:35.5px;font-size:13px;line-height:18px;color:#323236;font-weight:400;letter-spacing:-0.17px">Advanced</span>
<span class="t" style="left:481.7px;top:35.5px;font-size:13px;line-height:18px;color:#323236;font-weight:400;letter-spacing:-0.10px">View</span>
<span class="t" style="left:1639.4px;top:7.5px;font-size:13px;line-height:18px;color:#15151a;font-weight:700;letter-spacing:-0.11px">Buy Now</span>
<span class="t" style="left:1740.7px;top:7.5px;font-size:13px;line-height:18px;color:#15151a;font-weight:700;letter-spacing:0.00px">Sign In</span>
<span class="t" style="left:1713.1px;top:35.3px;font-size:13px;line-height:18px;color:#323236;font-weight:400;letter-spacing:-0.28px">Publish</span>
<span class="t" style="left:1793.4px;top:35.3px;font-size:13px;line-height:18px;color:#323236;font-weight:400;letter-spacing:-0.51px">Share</span>
<span class="t" style="left:13.2px;top:91.5px;font-size:13px;line-height:18px;color:#323236;font-weight:400;letter-spacing:0.51px">MindMap</span>
<span class="t" style="left:79.7px;top:91.5px;font-size:13px;line-height:18px;color:#323236;font-weight:400;letter-spacing:0.10px">Outliner</span>
<span class="t" style="left:55.3px;top:126.5px;font-size:12px;line-height:17px;color:#6b6b70;font-weight:400;letter-spacing:0.32px">Mode</span>
<span class="t" style="left:147.2px;top:91.5px;font-size:13px;line-height:18px;color:#323236;font-weight:400;letter-spacing:-0.65px">Paste</span>
<span class="t" style="left:211.2px;top:70.5px;font-size:13px;line-height:18px;color:#a9a9ad;font-weight:400;letter-spacing:-0.54px">Cut</span>
<span class="t" style="left:211.2px;top:99.5px;font-size:13px;line-height:18px;color:#a9a9ad;font-weight:400;letter-spacing:-0.24px">Copy</span>
<span class="t" style="left:197.7px;top:126.5px;font-size:12px;line-height:17px;color:#6b6b70;font-weight:400;letter-spacing:-0.03px">Clipboard</span>
<span class="t" style="left:256.2px;top:91.5px;font-size:13px;line-height:18px;color:#a9a9ad;font-weight:400;letter-spacing:-0.00px">Format</span>
<span class="t" style="left:256.2px;top:107.6px;font-size:13px;line-height:18px;color:#a9a9ad;font-weight:400;letter-spacing:-0.24px">Painter</span>
<span class="t" style="left:317.7px;top:91.5px;font-size:13px;line-height:18px;color:#323236;font-weight:400;letter-spacing:0.57px">Topic</span>
<span class="t" style="left:359.1px;top:91.5px;font-size:13px;line-height:18px;color:#323236;font-weight:400;letter-spacing:0.09px">Subtopic</span>
<span class="t" style="left:419.7px;top:91.5px;font-size:13px;line-height:18px;color:#323236;font-weight:400;letter-spacing:-0.09px">Floating</span>
<span class="t" style="left:427.2px;top:107.6px;font-size:13px;line-height:18px;color:#323236;font-weight:400;letter-spacing:0.55px">Topic</span>
<span class="t" style="left:407.7px;top:126.5px;font-size:12px;line-height:17px;color:#6b6b70;font-weight:400;letter-spacing:0.40px">Topic</span>
<span class="t" style="left:476.2px;top:91.5px;font-size:13px;line-height:18px;color:#323236;font-weight:400;letter-spacing:0.34px">Multiple</span>
<span class="t" style="left:480.3px;top:107.6px;font-size:13px;line-height:18px;color:#323236;font-weight:400;letter-spacing:0.19px">Topics</span>
<span class="t" style="left:541.7px;top:91.5px;font-size:13px;line-height:18px;color:#323236;font-weight:400;letter-spacing:-0.01px">Relationship</span>
<span class="t" style="left:619.7px;top:91.5px;font-size:13px;line-height:18px;color:#a9a9ad;font-weight:400;letter-spacing:0.03px">Callout</span>
<span class="t" style="left:670.7px;top:91.5px;font-size:13px;line-height:18px;color:#a9a9ad;font-weight:400;letter-spacing:-0.00px">Boundary</span>
<span class="t" style="left:736.2px;top:91.5px;font-size:13px;line-height:18px;color:#a9a9ad;font-weight:400;letter-spacing:-0.25px">Summary</span>
<span class="t" style="left:812.2px;top:91.5px;font-size:13px;line-height:18px;color:#a9a9ad;font-weight:400;letter-spacing:0.23px">Note</span>
<span class="t" style="left:851.2px;top:91.5px;font-size:13px;line-height:18px;color:#a9a9ad;font-weight:400;letter-spacing:0.75px">Mark</span>
<span class="t" style="left:804.7px;top:126.5px;font-size:12px;line-height:17px;color:#6b6b70;font-weight:400;letter-spacing:-0.13px">Insert</span>
<span class="t" style="left:892.2px;top:91.5px;font-size:13px;line-height:18px;color:#323236;font-weight:400;letter-spacing:-0.29px">Picture</span>
<span class="t" style="left:938.2px;top:91.5px;font-size:13px;line-height:18px;color:#323236;font-weight:400;letter-spacing:-0.26px">Formula</span>
<span class="t" style="left:989.4px;top:91.5px;font-size:13px;line-height:18px;color:#323236;font-weight:400;letter-spacing:0.16px">Numbering</span>
<span class="t" style="left:1060.7px;top:91.5px;font-size:13px;line-height:18px;color:#323236;font-weight:400;letter-spacing:0.84px">More</span>
<span class="t" style="left:1118.2px;top:91.5px;font-size:13px;line-height:18px;color:#323236;font-weight:400;letter-spacing:0.03px">Find &amp;</span>
<span class="t" style="left:1114.1px;top:107.6px;font-size:13px;line-height:18px;color:#323236;font-weight:400;letter-spacing:-0.28px">Replace</span>
<span class="t" style="left:1127.2px;top:126.5px;font-size:12px;line-height:17px;color:#6b6b70;font-weight:400;letter-spacing:-0.28px">Find</span>
<span class="t" style="left:30.3px;top:152.0px;font-size:13px;line-height:18px;color:#323236;font-weight:400;letter-spacing:0.17px">Map1</span>
<span class="t" style="left:140.3px;top:152.0px;font-size:13px;line-height:18px;color:#323236;font-weight:400;letter-spacing:0.34px">Map2</span>
<span class="t" style="left:1375.3px;top:149.8px;font-size:21px;line-height:29px;color:#e3231a;font-weight:400;letter-spacing:0.76px">Right side panel</span>
<span class="t" style="left:1375.0px;top:177.7px;font-size:21px;line-height:29px;color:#e3231a;font-weight:400;letter-spacing:0.92px">Click to hide or show it</span>
<span class="t" style="left:1638.6px;top:226.3px;font-size:15px;line-height:21px;color:#26262b;font-weight:700;letter-spacing:-0.08px">Layout</span>
<span class="t" style="left:1638.7px;top:273.5px;font-size:13px;line-height:18px;color:#3a3a40;font-weight:400;letter-spacing:-0.12px">Layout</span>
<span class="t" style="left:1638.7px;top:323.6px;font-size:13px;line-height:18px;color:#3a3a40;font-weight:400;letter-spacing:0.09px">Topic Spacing</span>
<span class="t" style="left:1638.7px;top:361.7px;font-size:13px;line-height:18px;color:#3a3a40;font-weight:400;letter-spacing:0.19px">Horizontal</span>
<span class="t" style="left:1713.2px;top:361.7px;font-size:13px;line-height:18px;color:#3a3a40;font-weight:400;letter-spacing:-0.32px">30</span>
<span class="t" style="left:1798.7px;top:361.7px;font-size:13px;line-height:18px;color:#3a3a40;font-weight:400;letter-spacing:0.07px">Vertical</span>
<span class="t" style="left:1856.1px;top:361.7px;font-size:13px;line-height:18px;color:#3a3a40;font-weight:400;letter-spacing:-0.22px">30</span>
<span class="t" style="left:1660.2px;top:398.7px;font-size:13px;line-height:18px;color:#3a3a40;font-weight:400;letter-spacing:-0.12px">Branch Free Positioning</span>
<span class="t" style="left:1658.7px;top:430.7px;font-size:13px;line-height:18px;color:#3a3a40;font-weight:400;letter-spacing:0.14px">Alignment With Sibling Topic</span>
<span class="t" style="left:1658.7px;top:461.8px;font-size:13px;line-height:18px;color:#3a3a40;font-weight:400;letter-spacing:0.06px">Flexible Floating Topic</span>
<span class="t" style="left:1658.7px;top:492.5px;font-size:13px;line-height:18px;color:#3a3a40;font-weight:400;letter-spacing:0.25px">Topic Overlap</span>
<span class="t" style="left:1638.6px;top:537.1px;font-size:15px;line-height:21px;color:#26262b;font-weight:700;letter-spacing:0.10px">Theme</span>
<span class="t" style="left:1638.7px;top:584.7px;font-size:13px;line-height:18px;color:#3a3a40;font-weight:400;letter-spacing:-0.33px">Theme</span>
<span class="t" style="left:1638.7px;top:636.8px;font-size:13px;line-height:18px;color:#3a3a40;font-weight:400;letter-spacing:0.08px">Colored Branch</span>
<span class="t" style="left:1638.7px;top:678.6px;font-size:13px;line-height:18px;color:#3a3a40;font-weight:400;letter-spacing:0.03px">Theme Color</span>
<span class="t" style="left:1638.7px;top:718.5px;font-size:13px;line-height:18px;color:#3a3a40;font-weight:400;letter-spacing:-0.18px">Theme Font</span>
<span class="t" style="left:1782.4px;top:722.3px;font-size:8px;line-height:11px;color:#333;font-weight:400;letter-spacing:-0.70px">Aa</span>
<span class="t" style="left:1796.3px;top:718.5px;font-size:13px;line-height:18px;color:#222;font-weight:400;letter-spacing:-0.06px">Arial (Big)</span>
<span class="t" style="left:1659.1px;top:756.0px;font-size:13px;line-height:18px;color:#3a3a40;font-weight:400;letter-spacing:-0.11px">Hand-Drawn Style</span>
<span class="t" style="left:1639.1px;top:800.9px;font-size:15px;line-height:21px;color:#26262b;font-weight:700;letter-spacing:-0.42px">Background</span>
<span class="t" style="left:1657.9px;top:868.5px;font-size:13px;line-height:18px;color:#3a3a40;font-weight:400;letter-spacing:0.27px">None</span>
<span class="t" style="left:1722.7px;top:868.5px;font-size:13px;line-height:18px;color:#3a3a40;font-weight:400;letter-spacing:0.39px">Color</span>
<span class="t" style="left:1783.4px;top:868.5px;font-size:13px;line-height:18px;color:#3a3a40;font-weight:400;letter-spacing:0.00px">Texture</span>
<span class="t" style="left:1849.7px;top:868.5px;font-size:13px;line-height:18px;color:#3a3a40;font-weight:400;letter-spacing:0.38px">Image</span>
<span class="t" style="left:1658.9px;top:914.8px;font-size:13px;line-height:18px;color:#3a3a40;font-weight:400;letter-spacing:0.20px">Insert Watermark</span>
<span class="t" style="left:59.0px;top:1014.7px;font-size:13px;line-height:18px;color:#323236;font-weight:400;letter-spacing:-0.25px">Page-1</span>
<span class="t" style="left:232.0px;top:1014.7px;font-size:13px;line-height:18px;color:#27a06d;font-weight:700;letter-spacing:-0.20px">Page-1</span>
<span class="t" style="left:1469.7px;top:1014.7px;font-size:13px;line-height:18px;color:#323236;font-weight:400;letter-spacing:-0.03px">Count: 4</span>
<span class="t" style="left:1770.4px;top:1014.7px;font-size:13px;line-height:18px;color:#323236;font-weight:400;letter-spacing:-0.33px">100%</span>
<span class="t" style="left:757.1px;top:488.8px;font-size:23px;line-height:32px;color:#ffffff;font-weight:700;letter-spacing:0.77px">Main Idea</span>
<span class="t" style="left:977.1px;top:418.0px;font-size:20px;line-height:28px;color:#2b2b2b;font-weight:700;letter-spacing:-0.06px">Main Topic</span>
<span class="t" style="left:977.1px;top:491.2px;font-size:20px;line-height:28px;color:#2b2b2b;font-weight:700;letter-spacing:-0.06px">Main Topic</span>
<span class="t" style="left:977.1px;top:564.5px;font-size:20px;line-height:28px;color:#2b2b2b;font-weight:700;letter-spacing:-0.06px">Main Topic</span>
</body></html>
